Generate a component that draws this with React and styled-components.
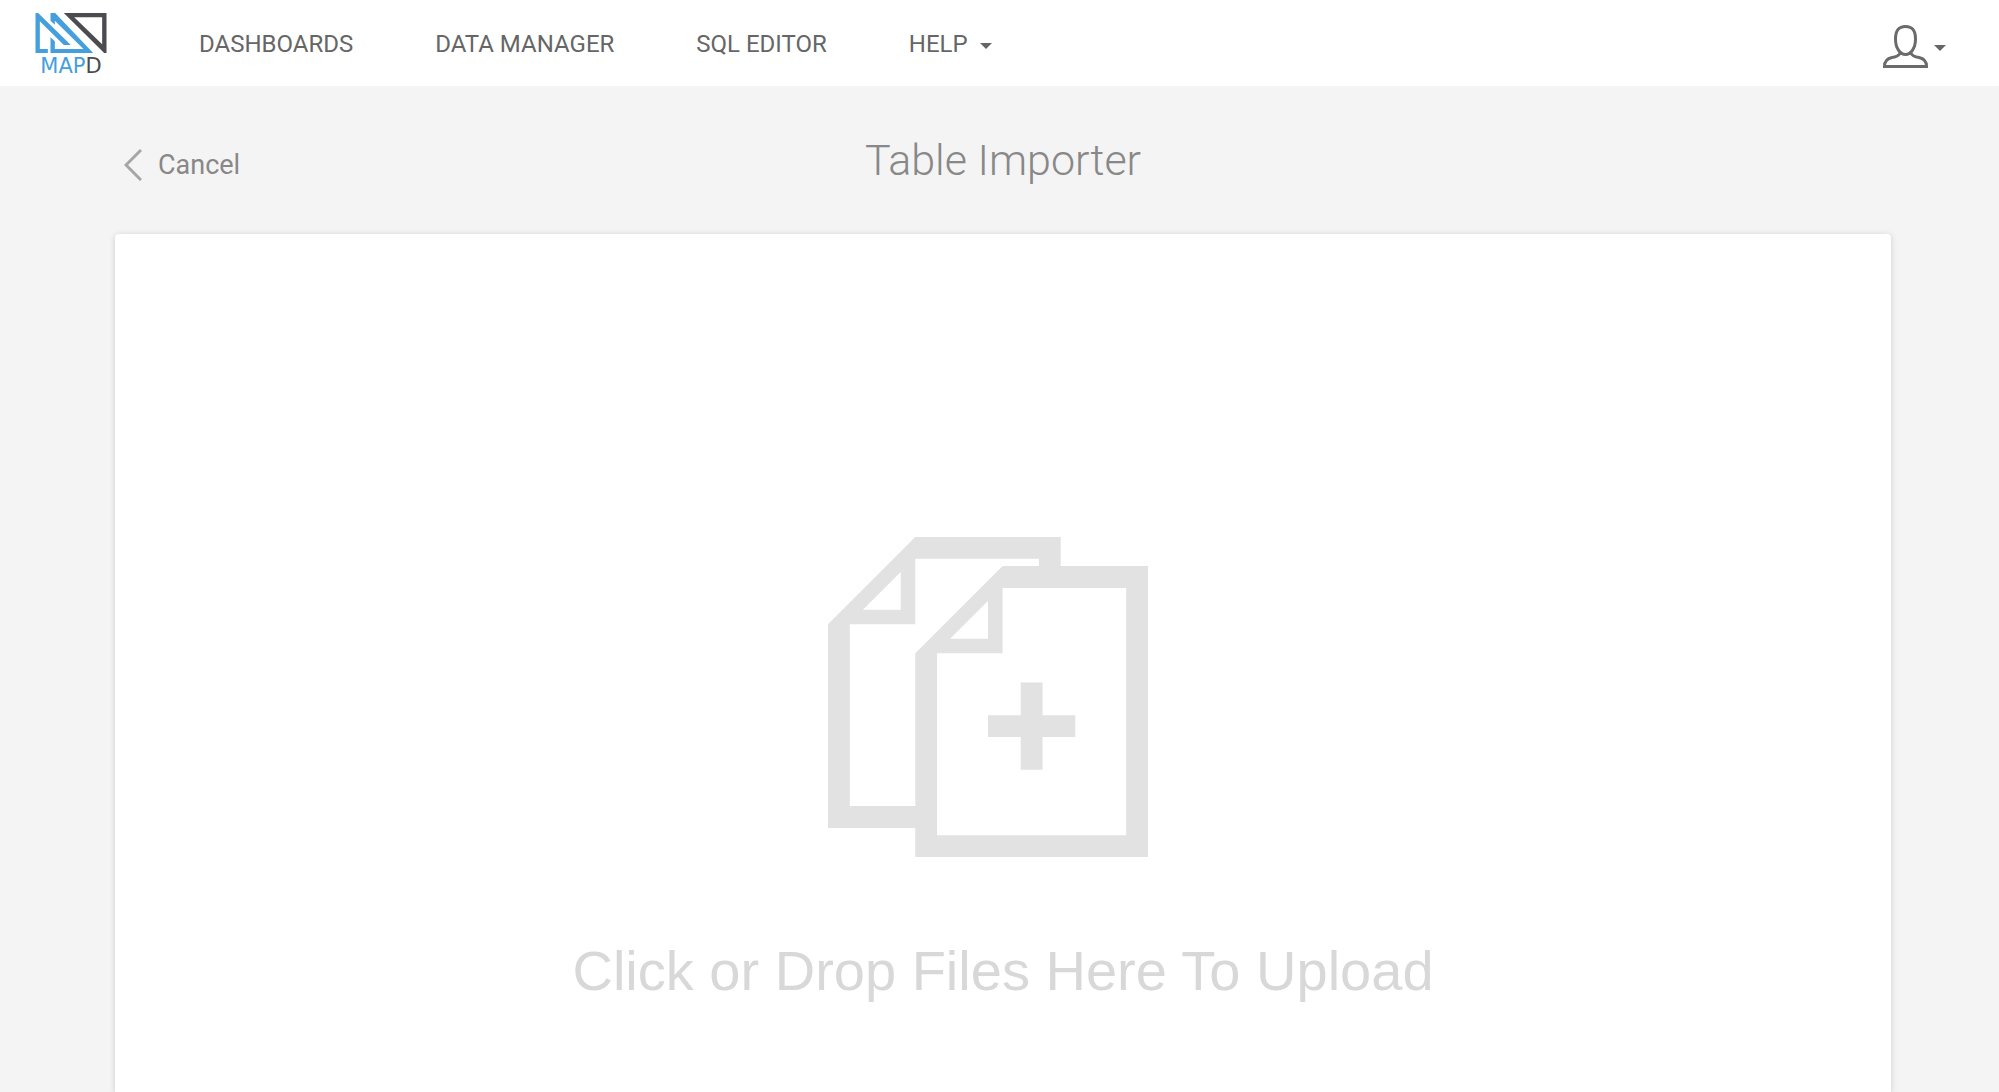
import React from "react";
import styled, { createGlobalStyle } from "styled-components";

const App = () => {
  return (
    <>
      <GlobalStyle />
      <Page>
        <Header>
          <LogoLink href="#" aria-label="MapD home">
            <LogoMark viewBox="46 39 213 120" aria-hidden="true">
              <path
                fill="#459fdc"
                d="M46 39H54L152 135H131L59 64V147H83V159H46Z"
              />
              <path
                fill="#459fdc"
                d="M91 39H105L219 159H91V112L104 124V147H190L104 62V74L91 62Z"
              />
              <path
                fill="#4b4b50"
                fillRule="evenodd"
                d="M131 39H259V159H252ZM162 52L246 133V52Z"
              />
            </LogoMark>
            <LogoName>
              MAP<LogoAccent>D</LogoAccent>
            </LogoName>
          </LogoLink>
          <Nav>
            <NavLink href="#">DASHBOARDS</NavLink>
            <NavLink href="#">DATA MANAGER</NavLink>
            <NavLink href="#">SQL EDITOR</NavLink>
            <MenuButton type="button" $gap={12}>
              HELP
              <Caret />
            </MenuButton>
          </Nav>
          <AccountButton type="button" aria-label="Account" $gap={6}>
            <UserIcon viewBox="0 0 45 43" aria-hidden="true">
              <path d="M22.5 1.5C15 1.5 12.5 6 12.5 14C12.5 23 17 29.5 22.5 29.5C28 29.5 32.5 23 32.5 14C32.5 6 30 1.5 22.5 1.5Z" />
              <path d="M17.5 27.5C16 31 13 32 9 32.5C4 33.5 1.5 36 1.5 41.5H43.5C43.5 36 41 33.5 36 32.5C32 32 29 31 27.5 27.5" />
            </UserIcon>
            <Caret />
          </AccountButton>
        </Header>
        <Main>
          <TitleBar>
            <CancelButton type="button">
              <BackIcon viewBox="0 0 18 32" aria-hidden="true">
                <path d="M17 1L2 16L17 31" />
              </BackIcon>
              Cancel
            </CancelButton>
            <Title>Table Importer</Title>
          </TitleBar>
          <DropZone type="button">
            <FilesIcon viewBox="0 0 44 44" aria-hidden="true">
              <path
                fillRule="evenodd"
                d="M0 12L12 0H32V4H44V44H12V40H0Z
                  M3 12V37H12V16L24 4H29V3H12V12Z
                  M15 16V41H41V7H24V16Z
                  M4.8 10H10V4.8Z
                  M16.8 14H22V8.8Z"
              />
              <path d="M26.5 20H29.5V24.5H34V27.5H29.5V32H26.5V27.5H22V24.5H26.5Z" />
            </FilesIcon>
            <DropText>Click or Drop Files Here To Upload</DropText>
          </DropZone>
        </Main>
      </Page>
    </>
  );
};

const GlobalStyle = createGlobalStyle`
  * {
    box-sizing: border-box;
  }

  body {
    margin: 0;
    background-color: #f4f4f4;
    font-family: Roboto, "Liberation Sans", sans-serif;
  }

  button {
    padding: 0;
    border: none;
    background: none;
    color: inherit;
    font: inherit;
    cursor: pointer;
  }
`;

const Page = styled.div`
  min-height: 100vh;
  display: flex;
  flex-direction: column;
`;

const Header = styled.header`
  height: 86px;
  padding: 2px 53px 0 35px;
  display: flex;
  align-items: center;
  background-color: #ffffff;
  color: #666666;
`;

const LogoLink = styled.a`
  width: 72px;
  display: flex;
  flex-direction: column;
  gap: 4px;
  text-decoration: none;
`;

const LogoMark = styled.svg`
  width: 72px;
  height: 40px;
`;

const LogoName = styled.span`
  color: #459fdc;
  font-family: "DejaVu Sans", sans-serif;
  font-size: 21px;
  line-height: 18px;
  text-align: center;
`;

const LogoAccent = styled.span`
  color: #4b4b50;
`;

const Nav = styled.nav`
  margin-left: 92px;
  flex: 1;
  display: flex;
  align-items: center;
  gap: 82px;
  font-size: 24px;
  line-height: 28px;
`;

const NavLink = styled.a`
  color: inherit;
  text-decoration: none;
`;

const MenuButton = styled.button`
  display: flex;
  align-items: center;
  gap: ${({ $gap }) => $gap}px;
`;

const AccountButton = styled(MenuButton)`
  margin-top: 4px;
`;

const Caret = styled.span`
  margin-top: 4px;
  border-top: 6px solid #666666;
  border-left: 6px solid transparent;
  border-right: 6px solid transparent;
`;

const UserIcon = styled.svg`
  width: 45px;
  height: 43px;
  fill: none;
  stroke: #6b6b6b;
  stroke-width: 3;
`;

const Main = styled.main`
  padding: 0 108px 0 115px;
  flex: 1;
  display: flex;
  flex-direction: column;
`;

const TitleBar = styled.div`
  height: 148px;
  display: grid;
  grid-template-columns: 1fr auto 1fr;
  align-items: center;
  color: #888888;
`;

const CancelButton = styled.button`
  margin: 10px 0 0 9px;
  display: flex;
  align-items: center;
  justify-self: start;
  gap: 16px;
  font-size: 27px;
  line-height: 32px;
`;

const BackIcon = styled.svg`
  width: 18px;
  height: 32px;
  fill: none;
  stroke: #a6a6a6;
  stroke-width: 3;
`;

const Title = styled.h1`
  margin: 0;
  font-size: 43px;
  font-weight: 300;
  line-height: 52px;
`;

const DropZone = styled.button`
  && {
    padding: 303px 0 80px;
    background-color: #ffffff;
  }
  flex: 1;
  display: flex;
  flex-direction: column;
  align-items: center;
  gap: 82px;
  border-radius: 4px 4px 0 0;
  box-shadow: 0 1px 6px rgba(0, 0, 0, 0.16);
`;

const FilesIcon = styled.svg`
  margin-right: 30px;
  width: 320px;
  height: 320px;
  fill: #e2e2e2;
`;

const DropText = styled.span`
  color: #d8d8d8;
  font-family: "Liberation Sans", Arial, sans-serif;
  font-size: 56px;
  line-height: 64px;
`;

export default App;
